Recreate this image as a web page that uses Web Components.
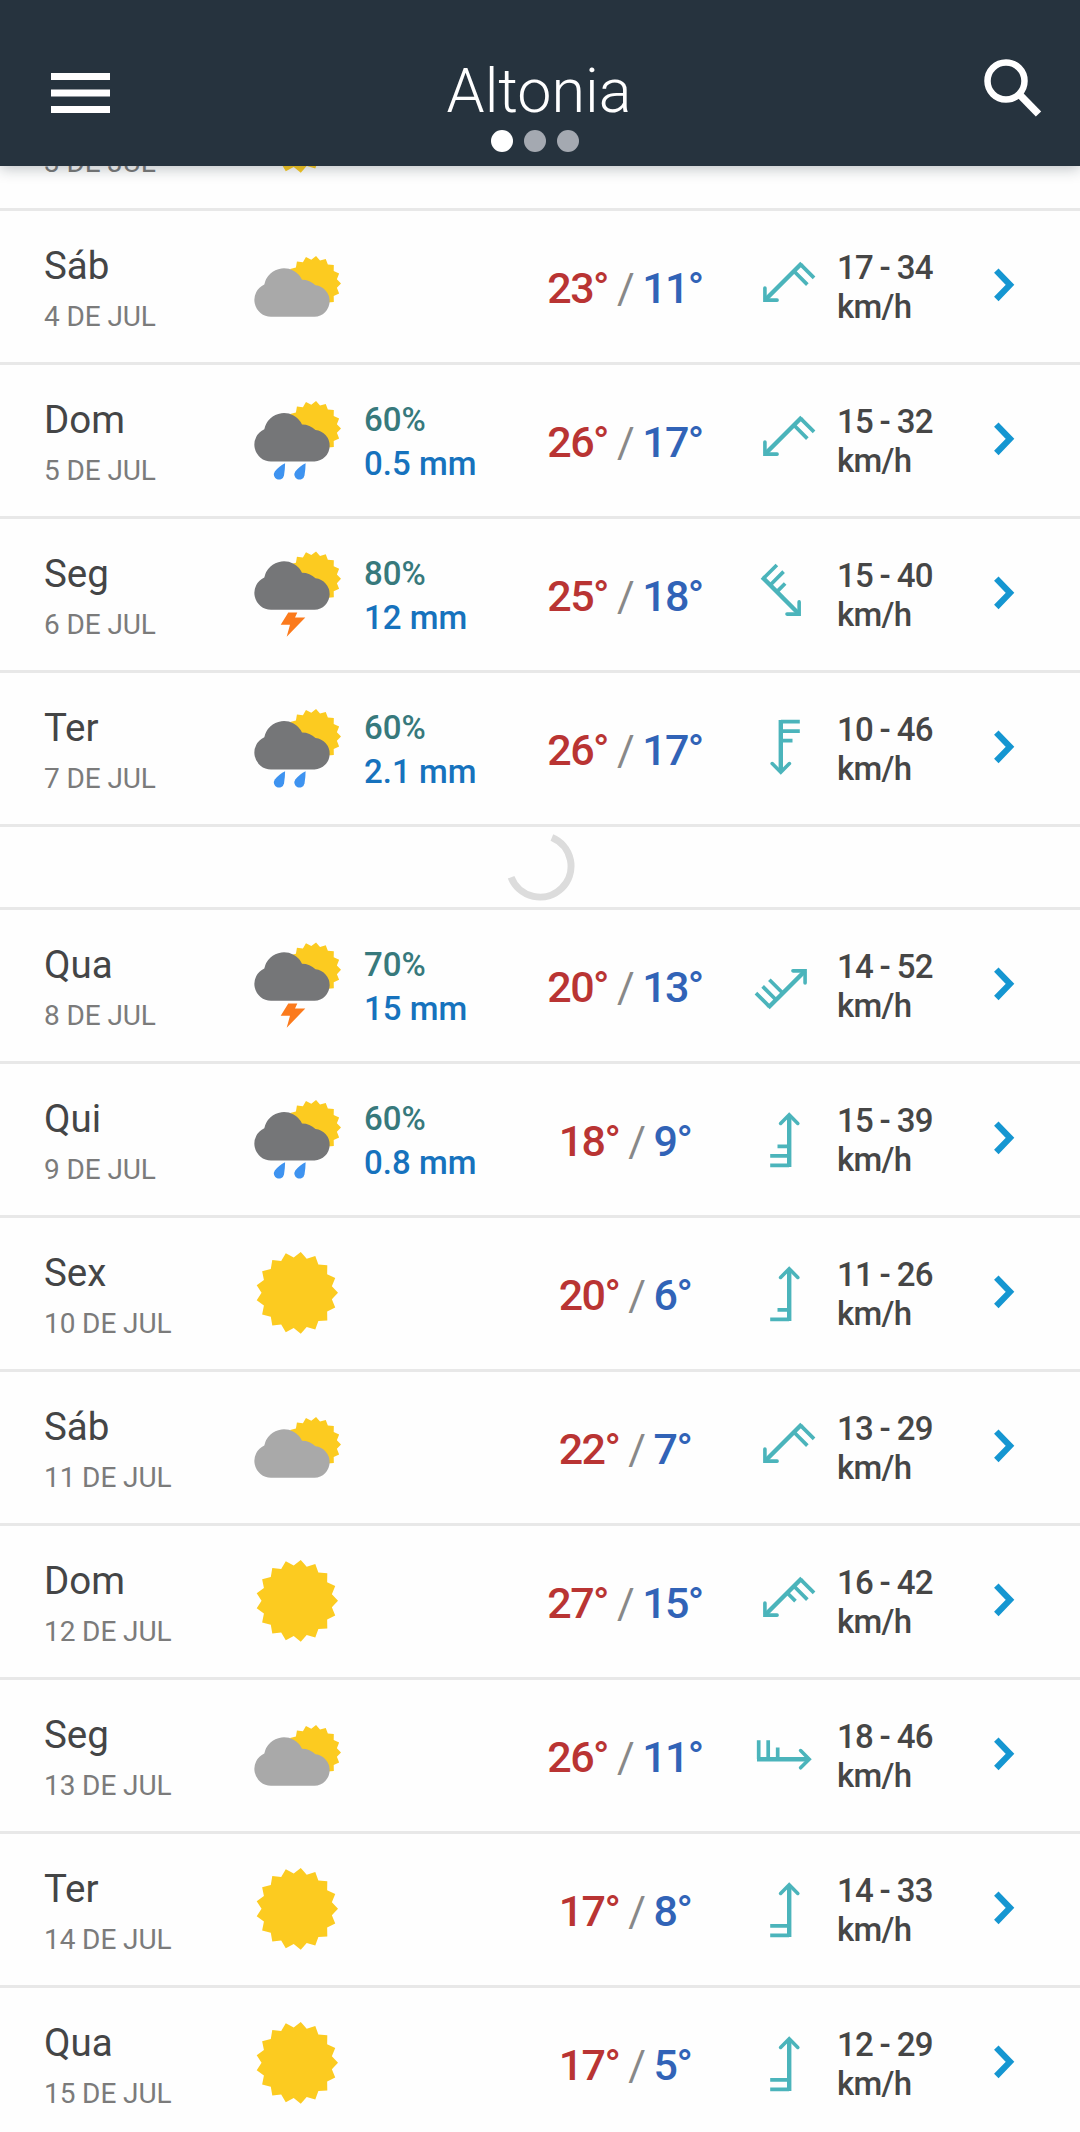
<!DOCTYPE html>
<html lang="pt">
<head>
  <meta charset="utf-8">
  <title>Altonia</title>
  <style>
    :root {
      --header-bg: #26333e;
      --line: #e8e8e8;
      --sun: #fccb20;
      --wind: #4bb4bb;
    }
    body {
      margin: 0;
      height: 2132px;
      overflow: hidden;
      background: #fefefe;
      font-family: Roboto, "Liberation Sans", sans-serif;
    }
  </style>
</head>
<body>
  <forecast-app>
    <app-header slot="header">Altonia</app-header>
    <day-row date="3 DE JUL" sky="sunny"></day-row>
    <day-row day="Sáb" date="4 DE JUL" sky="cloudy" max="23" min="11" wind="17 - 34" dir="225" barbs="ll"></day-row>
    <day-row day="Dom" date="5 DE JUL" sky="rain" prob="60%" amount="0.5 mm" max="26" min="17" wind="15 - 32" dir="225" barbs="ll"></day-row>
    <day-row day="Seg" date="6 DE JUL" sky="storm" prob="80%" amount="12 mm" max="25" min="18" wind="15 - 40" dir="135" barbs="lls"></day-row>
    <day-row day="Ter" date="7 DE JUL" sky="rain" prob="60%" amount="2.1 mm" max="26" min="17" wind="10 - 46" dir="180" barbs="lls"></day-row>
    <loading-row></loading-row>
    <day-row day="Qua" date="8 DE JUL" sky="storm" prob="70%" amount="15 mm" max="20" min="13" wind="14 - 52" dir="45" barbs="lll"></day-row>
    <day-row day="Qui" date="9 DE JUL" sky="rain" prob="60%" amount="0.8 mm" max="18" min="9" wind="15 - 39" dir="0" barbs="lls"></day-row>
    <day-row day="Sex" date="10 DE JUL" sky="sunny" max="20" min="6" wind="11 - 26" dir="0" barbs="ls"></day-row>
    <day-row day="Sáb" date="11 DE JUL" sky="cloudy" max="22" min="7" wind="13 - 29" dir="225" barbs="ll"></day-row>
    <day-row day="Dom" date="12 DE JUL" sky="sunny" max="27" min="15" wind="16 - 42" dir="225" barbs="lls"></day-row>
    <day-row day="Seg" date="13 DE JUL" sky="cloudy" max="26" min="11" wind="18 - 46" dir="90" barbs="lls"></day-row>
    <day-row day="Ter" date="14 DE JUL" sky="sunny" max="17" min="8" wind="14 - 33" dir="0" barbs="ll"></day-row>
    <day-row day="Qua" date="15 DE JUL" sky="sunny" max="17" min="5" wind="12 - 29" dir="0" barbs="ll"></day-row>
  </forecast-app>

  <script>
    class ForecastApp extends HTMLElement {
      constructor() {
        super();
        this.attachShadow({ mode: 'open' });
        this.shadowRoot.innerHTML = `
          <style>
            :host {
              display: flex;
              flex-direction: column;
              height: 2132px;
            }
            /* the list is scrolled, its first row sits partly under the header */
            .list {
              flex: 1;
              min-height: 0;
              overflow: hidden;
              display: flex;
              flex-direction: column;
            }
            .rows {
              margin-top: -109px;
            }
          </style>
          <slot name="header"></slot>
          <div class="list"><div class="rows"><slot></slot></div></div>
        `;
      }
    }

    class AppHeader extends HTMLElement {
      constructor() {
        super();
        this.attachShadow({ mode: 'open' });
        this.shadowRoot.innerHTML = `
          <style>
            :host {
              display: grid;
              grid-template-columns: 1fr auto 1fr;
              box-sizing: border-box;
              flex: none;
              height: 166px;
              padding: 56px 37px 0 35px;
              background: var(--header-bg);
              box-shadow: 0 2px 14px rgba(20, 35, 45, .3);
              z-index: 1;
              color: #fff;
            }
            .menu { margin: 16px 0 0 15px; }
            .search { justify-self: end; }
            .center {
              display: flex;
              flex-direction: column;
              align-items: center;
            }
            .title {
              font-size: 61px;
              font-weight: 300;
              line-height: 70px;
              white-space: nowrap;
            }
            .dots {
              display: flex;
              gap: 11px;
              margin: 4px 9px 0 0;
            }
            .dots i {
              width: 22px;
              height: 22px;
              border-radius: 50%;
              background: #a4a9b1;
            }
            .dots .on { background: #fff; }
          </style>
          <svg class="menu" width="62" height="44" viewBox="0 0 62 44">
            <path d="M1 4.5h59M1 21h59M1 37.5h59" stroke="#fff" stroke-width="7"/>
          </svg>
          <div class="center">
            <div class="title"><slot></slot></div>
            <div class="dots"><i class="on"></i><i></i><i></i></div>
          </div>
          <svg class="search" width="62" height="64" viewBox="0 0 62 64" fill="none" stroke="#fff">
            <circle cx="25" cy="25" r="18.5" stroke-width="6.5"/>
            <path d="M38.5 38.5L57.5 58" stroke-width="7.5"/>
          </svg>
        `;
      }
    }

    const sun = (cx, cy, r) => {
      const pts = [];
      for (let i = 0; i < 34; i++) {
        const a = i * Math.PI / 17;
        const d = i % 2 ? r * .865 : r;
        pts.push((cx + d * Math.cos(a)).toFixed(2) + ',' + (cy + d * Math.sin(a)).toFixed(2));
      }
      return `<polygon fill="var(--sun)" points="${pts.join(' ')}"/>`;
    };

    const cloud = (y, color) => `
      <path transform="translate(0 ${y})" fill="${color}"
        d="M17 49.3A16.9 16.9 0 0 1 10.3 17A20 20 0 0 1 48 12.2Q56 12.2 61.5 17.8A15.8 15.8 0 0 1 60.5 49.3Z"/>`;

    const drop = x => `
      <path transform="translate(${x} 72.2)" fill="#3e93f0"
        d="M11.3 0C11.3 4 10.9 8 10.2 12.3A5.1 5.1 0 1 1 1 8.4C3.8 4.6 7.5 1.8 11.3 0Z"/>`;

    const skies = {
      sunny: () => sun(43, 48.8, 41),
      cloudy: () => sun(59.5, 46.5, 27.5) + cloud(30.5, '#a9a9a9'),
      rain: () => sun(59.5, 37.5, 27.5) + cloud(21.2, '#757678') + drop(19.8) + drop(40.3),
      storm: () => sun(59.5, 33.8, 27.5) + cloud(15.5, '#757678') +
        '<polygon fill="#fb7a1c" points="34.3,67.5 43.3,67.5 41,72.5 51.3,72.5 32.7,91.8 36,79.8 26.7,79.8"/>'
    };

    class SkyIcon extends HTMLElement {
      connectedCallback() {
        if (!this.shadowRoot) this.attachShadow({ mode: 'open' });
        this.shadowRoot.innerHTML = `
          <style>
            :host { display: block; width: 88px; height: 100px; }
            svg { display: block; }
          </style>
          <svg width="88" height="100" viewBox="0 0 88 100">${skies[this.getAttribute('type')]()}</svg>
        `;
      }
    }

    // barbs: one letter for each, from the tail on: l = long, s = short
    class WindArrow extends HTMLElement {
      connectedCallback() {
        const barbs = [...this.getAttribute('barbs')].map((b, i) =>
          `M4 ${26.3 - i * 9.5}H${b === 'l' ? -14.8 : -7.5}`).join('');
        if (!this.shadowRoot) this.attachShadow({ mode: 'open' });
        this.shadowRoot.innerHTML = `
          <style>
            :host { display: block; width: 64px; height: 64px; }
            svg { display: block; }
          </style>
          <svg width="64" height="64" viewBox="-32 -32 64 64" fill="none" stroke="var(--wind)">
            <g transform="rotate(${this.getAttribute('dir')})">
              <path d="M4.2 28V-24" stroke-width="4.4"/>
              <path d="M-4.4 -15.6L4.2 -24.2L12.8 -15.6" stroke-width="3.6" stroke-linecap="round"/>
              <path d="${barbs}" stroke-width="3.7"/>
            </g>
          </svg>
        `;
      }
    }

    class DayRow extends HTMLElement {
      connectedCallback() {
        const get = name => this.getAttribute(name) || '';
        const details = !get('wind') ? '' : `
          <div class="rain">
            <div class="prob">${get('prob')}</div>
            <div class="mm">${get('amount')}</div>
          </div>
          <div class="temp"><b>${get('max')}°</b><span> / </span><em>${get('min')}°</em></div>
          <wind-arrow class="arrow" dir="${get('dir')}" barbs="${get('barbs')}"></wind-arrow>
          <div class="wind"><div>${get('wind')}</div><div>km/h</div></div>
          <svg class="chevron" width="24" height="36" viewBox="0 0 24 36" fill="none">
            <path d="M2.3 3.6L16 17.8L2.3 32" stroke="#1596d1" stroke-width="6.2"/>
          </svg>`;
        if (!this.shadowRoot) this.attachShadow({ mode: 'open' });
        this.shadowRoot.innerHTML = `
          <style>
            :host {
              display: grid;
              grid-template-columns: 210px 110px 156px 210px 107px 157px 1fr;
              height: 151px;
              padding-left: 44px;
              border-bottom: 3px solid var(--line);
            }
            .name {
              margin-top: 32px;
              height: 46px;
              font-size: 38.5px;
              line-height: 46px;
              color: #444546;
            }
            .date {
              margin-top: 11px;
              font-size: 28px;
              line-height: 34px;
              letter-spacing: -.1px;
              color: #7b7b7b;
              white-space: nowrap;
            }
            .sky { margin-top: 25.5px; }
            .rain {
              margin-top: 33px;
              font-size: 33px;
              font-weight: 500;
              line-height: 44px;
              white-space: nowrap;
            }
            .prob { color: #37797c; }
            .mm { color: #1672bd; }
            .temp {
              margin-top: 52px;
              font-size: 43px;
              font-weight: 500;
              line-height: 50px;
              text-align: center;
              letter-spacing: -1.6px;
              white-space: nowrap;
              color: #888;
            }
            .temp b { font-weight: 500; color: #b93433; }
            .temp span { font-weight: 400; }
            .temp em { font-style: normal; color: #3163b7; }
            .arrow { margin: 42.5px 0 0 23.2px; }
            .wind {
              margin-top: 37px;
              font-size: 33px;
              font-weight: 500;
              line-height: 39px;
              letter-spacing: -.7px;
              word-spacing: -1px;
              color: #464646;
            }
            .chevron { margin-top: 56px; }
          </style>
          <div>
            <div class="name">${get('day')}</div>
            <div class="date">${get('date')}</div>
          </div>
          <sky-icon class="sky" type="${get('sky')}"></sky-icon>
          ${details}
        `;
      }
    }

    class LoadingRow extends HTMLElement {
      constructor() {
        super();
        this.attachShadow({ mode: 'open' });
        this.shadowRoot.innerHTML = `
          <style>
            :host {
              display: flex;
              justify-content: center;
              height: 80px;
              border-bottom: 3px solid var(--line);
            }
            svg { margin-top: 2.6px; }
          </style>
          <svg width="72" height="72" viewBox="-36 -36 72 72" fill="none">
            <path d="M11.9 -28.6A31 31 0 1 1 -28.9 11.2" stroke="#dcdcdc" stroke-width="7"/>
          </svg>
        `;
      }
    }

    customElements.define('forecast-app', ForecastApp);
    customElements.define('app-header', AppHeader);
    customElements.define('sky-icon', SkyIcon);
    customElements.define('wind-arrow', WindArrow);
    customElements.define('day-row', DayRow);
    customElements.define('loading-row', LoadingRow);
  </script>
</body>
</html>
